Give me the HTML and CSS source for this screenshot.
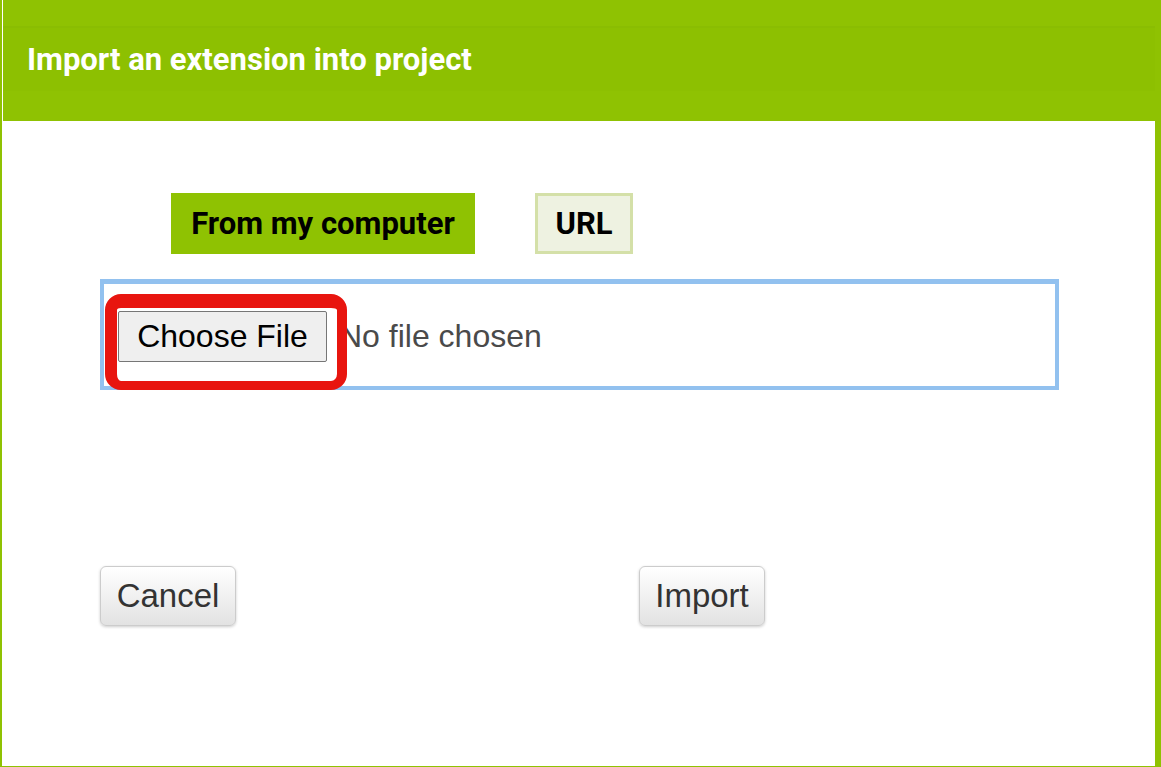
FILE: index.html
```html
<!DOCTYPE html>
<html>
<head>
<meta charset="utf-8">
<link rel="stylesheet" href="styles.css">
</head>
<body>
<div class="dialog">
  <div class="dialog-header">
    <div class="caption">Import an extension into project</div>
  </div>
  <div class="dialog-body">
    <div class="tabs">
      <div class="tab tab-active">From my computer</div>
      <div class="tab tab-url">URL</div>
    </div>
    <div class="file-box">
      <div class="file-input">
        <span class="file-btn">Choose File</span>
        <span class="file-status">No file chosen</span>
      </div>
      <div class="highlight"></div>
    </div>
    <div class="actions">
      <button class="btn btn-cancel">Cancel</button>
      <button class="btn btn-import">Import</button>
    </div>
  </div>
</div>
</body>
</html>
```

FILE: styles.css
```css
html, body {
  margin: 0;
  padding: 0;
}
body {
  background: #8fc202;
  width: 1161px;
  height: 767px;
  overflow: hidden;
}
.dialog {
  margin-left: 2px;
  width: 1153px;
  height: 766px;
  background: #ffffff;
  display: flex;
  flex-direction: column;
}
.dialog-header {
  height: 121px;
  margin-left: 1px;
  background: #8fc202;
  padding-top: 26px;
  box-sizing: border-box;
}
.caption {
  height: 65px;
  box-sizing: border-box;
  background: #8dc001;
  border-top: 2px solid #8abd02;
  display: flex;
  align-items: center;
  padding-left: 24px;
  font-family: Roboto, "Liberation Sans", sans-serif;
  font-weight: 700;
  font-size: 31px;
  color: #ffffff;
}
.dialog-body {
  padding-left: 98px;
}
.tabs {
  display: flex;
  margin-top: 72px;
  height: 61px;
}
.tab {
  box-sizing: border-box;
  height: 61px;
  display: flex;
  align-items: center;
  justify-content: center;
  font-family: Roboto, "Liberation Sans", sans-serif;
  font-weight: 700;
  font-size: 31px;
  color: #000000;
}
.tab-active {
  margin-left: 71px;
  width: 304px;
  background: #8fc202;
}
.tab-url {
  margin-left: 60px;
  width: 98px;
  background: #eef2e1;
  border: 3px solid #d4e0a8;
}
.file-box {
  position: relative;
  margin-top: 25px;
  width: 959px;
  height: 111px;
  box-sizing: border-box;
  border-style: solid;
  border-color: #92c1ef;
  border-width: 5px 4px 4px 4px;
  padding: 27px 0 0 14px;
}
.file-input {
  display: flex;
  align-items: center;
  font-family: "Liberation Sans", Arial, sans-serif;
  font-size: 32px;
}
.file-btn {
  box-sizing: border-box;
  height: 51px;
  width: 209px;
  display: flex;
  align-items: center;
  justify-content: center;
  background: #efefef;
  border: 1px solid #767676;
  border-radius: 2px;
  color: #000000;
}
.file-status {
  margin-left: 12px;
  color: #4a4a4a;
}
.highlight {
  position: absolute;
  left: 1px;
  top: 10px;
  width: 242px;
  height: 96px;
  box-sizing: border-box;
  border-style: solid;
  border-color: #e8150f;
  border-width: 14px 10px 9px 12px;
  border-radius: 16px;
}
.actions {
  display: flex;
  margin-top: 176px;
}
.btn {
  box-sizing: border-box;
  height: 60px;
  padding: 0;
  font-family: "Liberation Sans", Arial, sans-serif;
  font-size: 33px;
  color: #333333;
  background: linear-gradient(to bottom, #ffffff 0%, #e2e2e2 100%);
  border: 1px solid #cccccc;
  border-radius: 6px;
  box-shadow: 0 1px 3px rgba(0, 0, 0, 0.2);
}
.btn-cancel {
  width: 136px;
}
.btn-import {
  width: 126px;
  margin-left: 403px;
}
```
